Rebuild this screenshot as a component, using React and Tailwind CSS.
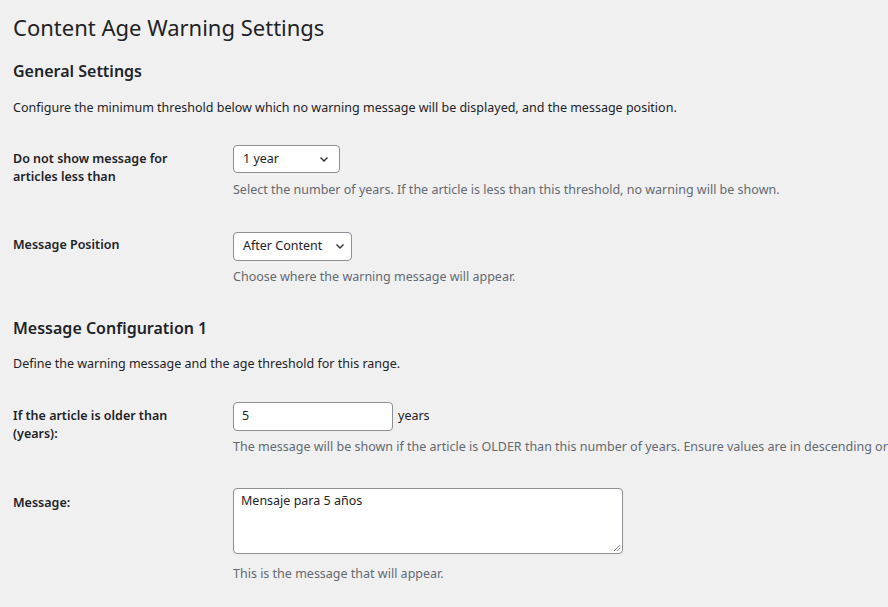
export default function App() {
  const font = { fontFamily: '"Noto Sans", "Open Sans", sans-serif' };
  const Chev = () => (
    <svg width="12" height="12" viewBox="0 0 12 12" className="ml-auto"><path d="M2.5 4.5 L6 8 L9.5 4.5" fill="none" stroke="#2c3338" strokeWidth="1.4" /></svg>
  );
  return (
    <div style={font} className="w-[888px] h-[607px] overflow-hidden bg-[#f0f0f1] text-[#1d2327] text-[12.5px] pl-[13px] whitespace-nowrap">
      <h1 className="text-[22px] pt-[12px] leading-[30px]">Content Age Warning Settings</h1>
      <h2 className="text-[16px] font-semibold mt-[18px] leading-[22px]">General Settings</h2>
      <p className="mt-[17px] leading-[18px]">Configure the minimum threshold below which no warning message will be displayed, and the message position.</p>

      <div className="flex mt-[28px]">
        <div className="w-[220px] shrink-0 font-semibold leading-[18px] pt-[5px]">Do not show message for<br />articles less than</div>
        <div>
          <div className="w-[107px] h-[28px] bg-white border border-[#8c8f94] rounded-[4px] flex items-center px-[9px]">1 year<Chev /></div>
          <p className="text-[#646970] mt-[8px]">Select the number of years. If the article is less than this threshold, no warning will be shown.</p>
        </div>
      </div>

      <div className="flex mt-[32px]">
        <div className="w-[220px] shrink-0 font-semibold leading-[18px] pt-[4px]">Message Position</div>
        <div>
          <div className="w-[119px] h-[29px] bg-white border border-[#8c8f94] rounded-[4px] flex items-center pl-[9px] pr-[5px]">After Content<Chev /></div>
          <p className="text-[#646970] mt-[7px]">Choose where the warning message will appear.</p>
        </div>
      </div>

      <h2 className="text-[16px] font-semibold mt-[30px] leading-[22px]">Message Configuration 1</h2>
      <p className="mt-[16px] leading-[18px]">Define the warning message and the age threshold for this range.</p>

      <div className="flex mt-[29px]">
        <div className="w-[220px] shrink-0 font-semibold leading-[18px] pt-[5px]">If the article is older than<br />(years):</div>
        <div>
          <div className="flex items-center">
            <div className="w-[160px] h-[29px] bg-white border border-[#8c8f94] rounded-[4px] flex items-center px-[8px]">5</div>
            <span className="ml-[5px]">years</span>
          </div>
          <p className="text-[#646970] mt-[7px]">The message will be shown if the article is OLDER than this number of years. Ensure values are in descending order.</p>
        </div>
      </div>

      <div className="flex mt-[32px]">
        <div className="w-[220px] shrink-0 font-semibold leading-[18px] pt-[6px]">Message:</div>
        <div>
          <div className="relative w-[390px] h-[66px] bg-white border border-[#8c8f94] rounded-[4px] px-[7px] pt-[3px]">Mensaje para 5 años
            <svg className="absolute right-[1px] bottom-[1px]" width="8" height="8" viewBox="0 0 8 8"><path d="M7 1 L1 7 M7 4 L4 7" stroke="#888" strokeWidth="1" /></svg>
          </div>
          <p className="text-[#646970] mt-[11px]">This is the message that will appear.</p>
        </div>
      </div>
    </div>
  );
}
